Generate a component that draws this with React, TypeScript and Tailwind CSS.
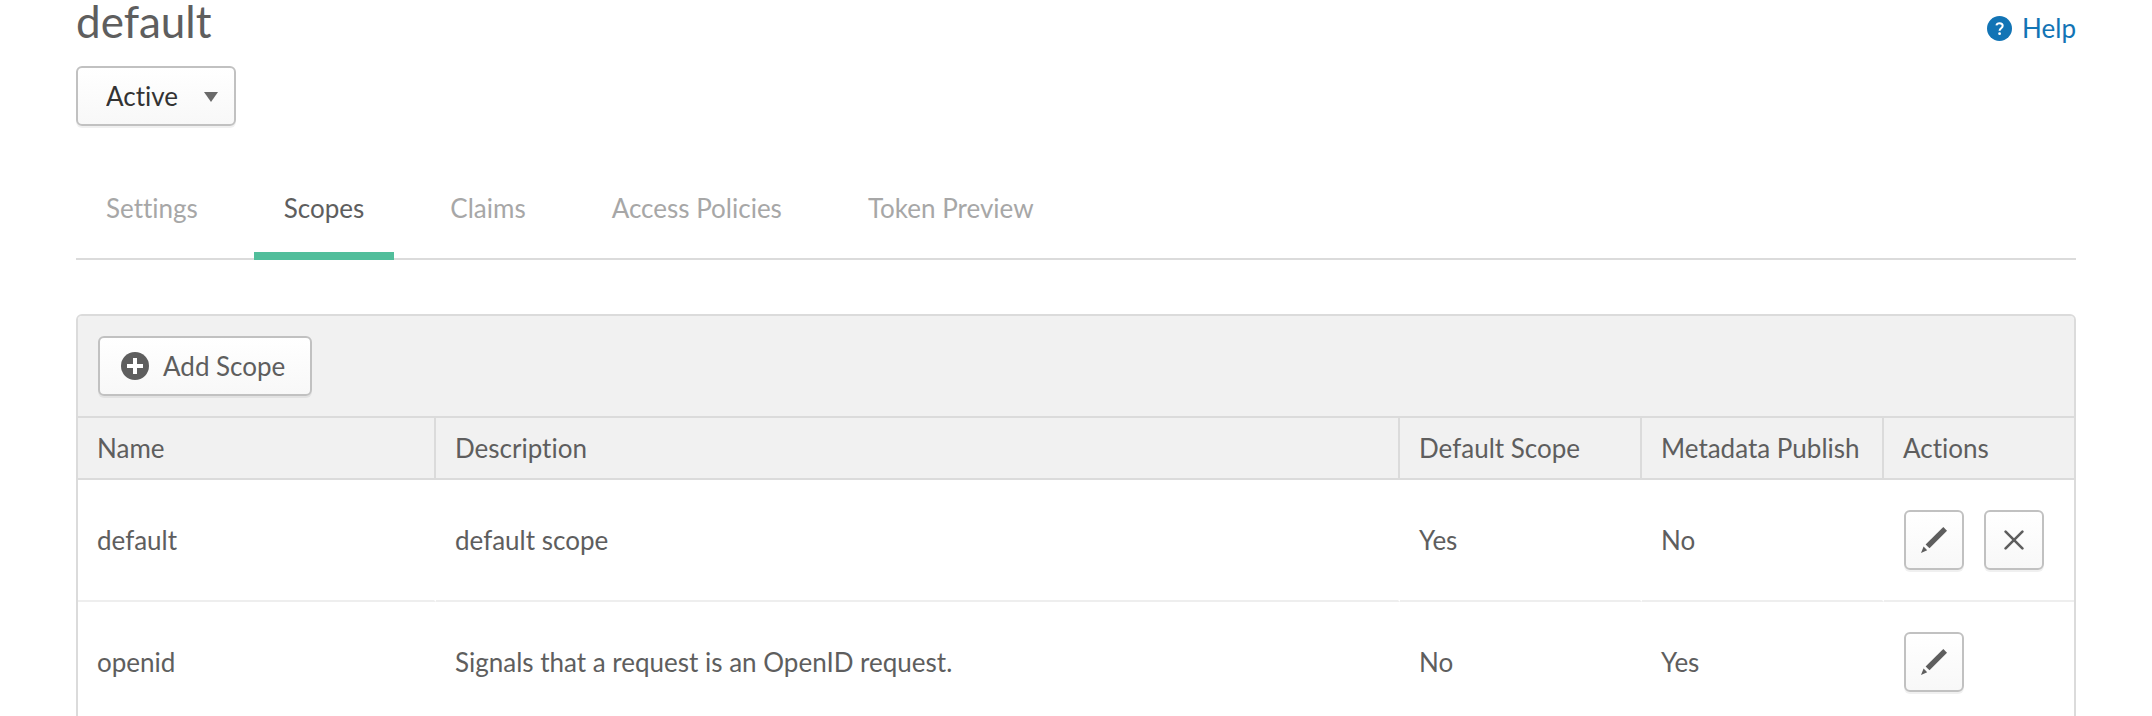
type Scope = {
  name: string;
  description: string;
  isDefault: boolean;
  published: boolean;
  removable: boolean;
};

const tabs = ["Settings", "Scopes", "Claims", "Access Policies", "Token Preview"];

const scopes: Scope[] = [
  { name: "default", description: "default scope", isDefault: true, published: false, removable: true },
  {
    name: "openid",
    description: "Signals that a request is an OpenID request.",
    isDefault: false,
    published: true,
    removable: false,
  },
];

const raised =
  "h-[60px] rounded-md border-2 border-[#c1c1c1] bg-linear-to-b from-white to-[#f8f8f8] shadow-[0_2px_0_rgba(0,0,0,0.06)]";

function PencilIcon() {
  return (
    <svg width="26" height="26" viewBox="0 0 26 26" fill="#5e5e5e" aria-hidden="true">
      <path d="M22.3 0 26 3.700 8.500 21.300 4.600 17.400Z" />
      <path d="M2.600 19.500 6.200 23.200 0 26Z" />
    </svg>
  );
}

function CloseIcon() {
  return (
    <svg width="20" height="20" viewBox="0 0 20 20" stroke="#5e5e5e" strokeWidth="2.6" strokeLinecap="round" aria-hidden="true">
      <path d="M1.600 1.600 18.400 18.400M18.400 1.600 1.600 18.400" />
    </svg>
  );
}

function PlusIcon() {
  return (
    <svg width="28" height="28" viewBox="0 0 28 28" aria-hidden="true">
      <circle cx="14" cy="14" r="14" fill="#5e5e5e" />
      <path d="M14 6v16M6 14h16" stroke="#fff" strokeWidth="4" />
    </svg>
  );
}

function HelpIcon() {
  return (
    <svg width="25" height="25" viewBox="0 0 25 25" fill="none" aria-hidden="true">
      <circle cx="12.500" cy="12.500" r="12.500" fill="#1274b5" />
      <path
        d="M9.400 9.400C9.700 8 10.900 7.200 12.500 7.200c1.900 0 3.200 1 3.200 2.600 0 2.500-3.100 2.400-3.100 5"
        stroke="#fff"
        strokeWidth="2"
      />
      <circle cx="12.600" cy="17.700" r="1.400" fill="#fff" />
    </svg>
  );
}

const th = "h-[62px] border-r-2 border-b-2 border-[#dbdbdb] px-[19px] text-left font-normal whitespace-nowrap last:border-r-0";
const td = "h-[122px] border-r-2 border-b-2 border-r-white border-b-[#eeeeee] px-[19px] last:border-r-0 last:px-5";

export default function App() {
  return (
    <main className="bg-white px-[76px] font-['Lato','Liberation_Sans',sans-serif] text-[26px] leading-8 text-[#5e5e5e] [font-variant-ligatures:none]">
      <header className="flex items-start justify-between">
        <h1 className="h-[66px] text-[44px] leading-[42px]">default</h1>
        <a href="#help" className="flex items-center gap-2.5 pt-3 text-[#1274b5]">
          <HelpIcon />
          Help
        </a>
      </header>

      <div className="relative w-40">
        <select aria-label="Status" className={`${raised} block w-full appearance-none pl-7 text-[#333333]`}>
          <option>Active</option>
          <option>Inactive</option>
        </select>
        <svg
          className="pointer-events-none absolute top-[26px] right-[18px]"
          width="14"
          height="10"
          viewBox="0 0 14 10"
          fill="#6a6a6a"
          aria-hidden="true"
        >
          <path d="M0 0h14L7 10Z" />
        </svg>
      </div>

      <nav className="mt-[52px] flex gap-[26px] border-b-2 border-[#dbdbdb]">
        {tabs.map((tab) => (
          <a
            key={tab}
            href="#tab"
            aria-current={tab === "Scopes" ? "page" : undefined}
            className={
              tab === "Scopes"
                ? "-mb-0.5 border-b-8 border-[#51be9b] px-[30px] pt-3.5 pb-7"
                : "px-[30px] pt-3.5 pb-7 text-[#a7a7a7]"
            }
          >
            {tab}
          </a>
        ))}
      </nav>

      <section className="mt-[54px] overflow-hidden rounded-md border-2 border-[#dbdbdb]">
        <div className="border-b-2 border-[#dbdbdb] bg-[#f1f1f1] p-5">
          <button type="button" className={`${raised} flex min-w-[214px] items-center gap-3.5 px-[21px]`}>
            <PlusIcon />
            Add Scope
          </button>
        </div>
        <table className="w-full table-fixed border-separate border-spacing-0">
          <thead className="bg-[#f1f1f1]">
            <tr>
              <th className={`${th} w-[358px]`}>Name</th>
              <th className={th}>Description</th>
              <th className={`${th} w-[242px]`}>Default Scope</th>
              <th className={`${th} w-[242px]`}>Metadata Publish</th>
              <th className={`${th} w-[190px]`}>Actions</th>
            </tr>
          </thead>
          <tbody>
            {scopes.map((scope) => (
              <tr key={scope.name}>
                <td className={td}>{scope.name}</td>
                <td className={td}>{scope.description}</td>
                <td className={td}>{scope.isDefault ? "Yes" : "No"}</td>
                <td className={td}>{scope.published ? "Yes" : "No"}</td>
                <td className={td}>
                  <div className="flex gap-5">
                    <button type="button" aria-label={`Edit ${scope.name}`} className={`${raised} flex w-[60px] items-center justify-center`}>
                      <PencilIcon />
                    </button>
                    {scope.removable && (
                      <button type="button" aria-label={`Delete ${scope.name}`} className={`${raised} flex w-[60px] items-center justify-center`}>
                        <CloseIcon />
                      </button>
                    )}
                  </div>
                </td>
              </tr>
            ))}
          </tbody>
        </table>
      </section>
    </main>
  );
}
